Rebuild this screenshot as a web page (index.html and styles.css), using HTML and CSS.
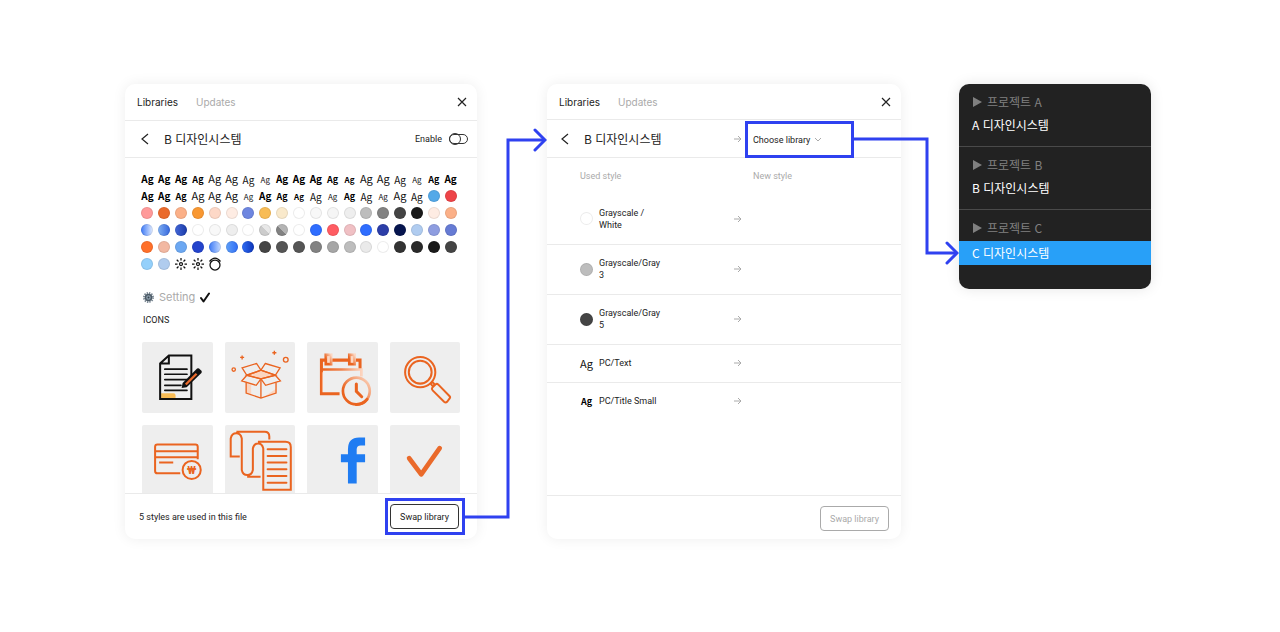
FILE: index.html
```html
<!DOCTYPE html>
<html lang="ko">
<head>
    <meta charset="UTF-8">
    <title>Swap library</title>
    <link rel="stylesheet" href="styles.css">
</head>
<body>
    <main class="board">
        <section class="panel">
            <header class="tabs">
                <button type="button" class="tab active">Libraries</button>
                <button type="button" class="tab">Updates</button>
                <button type="button" class="close" aria-label="Close">
                    <svg width="10" height="10" viewBox="0 0 10 10"><path d="M1 1l8 8M9 1l-8 8"/></svg>
                </button>
            </header>
            <div class="title-row">
                <button type="button" class="back" aria-label="Back">
                    <svg width="8" height="12" viewBox="0 0 8 12"><path d="M7 1L1 6l6 5"/></svg>
                </button>
                <h2>B 디자인시스템</h2>
                <label class="enable">Enable <input type="checkbox" class="toggle"></label>
            </div>
            <div class="content">
                <div class="swatches" id="swatches"></div>
                <div class="setting">
                    <svg width="11" height="11" viewBox="0 0 22 22">
                        <circle cx="11" cy="11" r="9" fill="none" stroke="#7b8894" stroke-width="4" stroke-dasharray="2.7 2"/>
                        <circle cx="11" cy="11" r="6" fill="#8fa0ae" stroke="#4c5a66" stroke-width="3"/>
                        <circle cx="11" cy="11" r="2" fill="#36424c"/>
                    </svg>
                    <span>Setting</span>
                    <svg width="10" height="11" viewBox="0 0 20 22"><path d="M2 12l5 7L18 3" fill="none" stroke="#111" stroke-width="4" stroke-linecap="round" stroke-linejoin="round"/></svg>
                </div>
                <h3>ICONS</h3>
                <div class="icons">
                    <div class="icon">
                        <svg viewBox="0 0 210 210">
                            <path d="M57 153h37a6 6 0 0 1 6 6v8H57z" fill="#f8bc55"/>
                            <path d="M80 40h67v130H54V64zM80 40v24H54" fill="none" stroke="#111" stroke-width="6"/>
                            <path d="M68 81h66M68 96h66M68 112h66M68 129h48M68 144h66" stroke="#111" stroke-width="5" stroke-linecap="round"/>
                            <path d="M118 137l3-15 43-43a5 5 0 0 1 6 0l7 7a5 5 0 0 1 0 6l-44 43z" fill="#111"/>
                            <path d="M128 124l32-32 5 5-32 32z" fill="#ea6a2b"/>
                        </svg>
                    </div>
                    <div class="icon">
                        <svg viewBox="0 0 210 210" class="line-thin">
                            <path d="M65 99l42-15 43 15-43 11z" fill="#fbd5c0"/>
                            <path d="M64 122l14 5v32l-14-6zM121 160l30-20v12l-30 11z" class="tint"/>
                            <path d="M63 121v31l44 15 45-15v-31M107 110v57"/>
                            <path d="M51 77l43-13 13 20-42 15zM120 64l44 13-14 22-43-15zM65 99l-15 17 43 13 14-19zM150 99l15 17-44 13-14-19z"/>
                            <path d="M51 40v12M45 46h12M147 26v12M141 32h12"/>
                            <circle cx="26" cy="82" r="5"/>
                            <circle cx="181" cy="53" r="7"/>
                        </svg>
                    </div>
                    <div class="icon">
                        <svg viewBox="0 0 210 210" class="line">
                            <defs>
                                <linearGradient id="fadeX"><stop offset="0" stop-color="#ea6420"/><stop offset=".5" stop-color="#ef8450"/><stop offset="1" stop-color="#fcd3bd"/></linearGradient>
                                <linearGradient id="fadeUp" x1="0" y1="1" x2="1" y2="0"><stop offset=".3" stop-color="#ea6420"/><stop offset="1" stop-color="#fcd8c4"/></linearGradient>
                            </defs>
                            <path d="M97 154H43V54h115v28" stroke="#ea6420" stroke-width="9"/>
                            <path d="M43 82h119v21" stroke="url(#fadeX)" stroke-width="8"/>
                            <path d="M46 90v60" stroke="#fbb088" stroke-width="3"/>
                            <rect x="56" y="38" width="16" height="28" fill="#fcd8c4" stroke="url(#fadeUp)" stroke-width="8"/>
                            <rect x="126" y="38" width="16" height="28" fill="#fcd8c4" stroke="url(#fadeUp)" stroke-width="8"/>
                            <circle cx="147" cy="146" r="40" fill="#eee" stroke="url(#fadeUp)" stroke-width="8"/>
                            <path d="M147 125v22l16 16M147 186a40 40 0 0 0 32-15" stroke-width="9" stroke-linecap="round"/>
                        </svg>
                    </div>
                    <div class="icon">
                        <svg viewBox="0 0 210 210" class="line">
                            <circle cx="90" cy="90" r="45"/>
                            <circle cx="90" cy="90" r="34"/>
                            <path d="M121 124l5-5 7 7-5 7zM126 136l10-10q4-3 8 1l33 34q4 4 0 8l-7 9q-4 4-9 0l-34-34q-4-4-1-8z"/>
                        </svg>
                    </div>
                    <div class="icon">
                        <svg viewBox="0 0 210 210" class="line">
                            <path d="M114 144H46q-7 0-7-7V65q0-7 7-7h113q7 0 7 7v37M39 78h127M39 96h127M51 112h42"/>
                            <circle cx="148" cy="134" r="27"/>
                            <text x="148" y="145" class="won">₩</text>
                        </svg>
                    </div>
                    <div class="icon">
                        <svg viewBox="0 0 210 210" class="line">
                            <path d="M44 94H17V40a17 20 0 0 1 33 0v94a17 20 0 0 0 33 0V70a16 20 0 0 1 31 0v123h82V66q0-16-16-16H98M34 20h84q14 0 14 14v9M66 154h40"/>
                            <path d="M127 72h56M127 92h56M127 112h56M127 132h56M127 152h56M127 172h56" stroke-linecap="round"/>
                        </svg>
                    </div>
                    <div class="icon">
                        <svg viewBox="0 0 210 210"><path d="M122 174v-63h-21V87h21V72q0-35 33-35h18v24h-13q-12 0-12 12v14h25v24h-25v63z" fill="#1f7cf2"/></svg>
                    </div>
                    <div class="icon">
                        <svg viewBox="0 0 210 210"><path d="M57 99l36 48 55-78" fill="none" stroke="#ea6a2b" stroke-width="14" stroke-linecap="round" stroke-linejoin="round"/></svg>
                    </div>
                </div>
            </div>
            <footer>
                <p>5 styles are used in this file</p>
                <div class="highlight">
                    <button type="button" class="swap">Swap library</button>
                </div>
            </footer>
            <svg class="connector to-swap" width="82" height="393" viewBox="0 0 82 393">
                <path d="M0 391H43V14h37"/>
                <path d="M70 4l10 10-10 10" stroke-linecap="round"/>
            </svg>
        </section>

        <section class="panel second">
            <header class="tabs">
                <button type="button" class="tab active">Libraries</button>
                <button type="button" class="tab">Updates</button>
                <button type="button" class="close" aria-label="Close">
                    <svg width="10" height="10" viewBox="0 0 10 10"><path d="M1 1l8 8M9 1l-8 8"/></svg>
                </button>
            </header>
            <div class="title-row">
                <button type="button" class="back" aria-label="Back">
                    <svg width="8" height="12" viewBox="0 0 8 12"><path d="M7 1L1 6l6 5"/></svg>
                </button>
                <h2>B 디자인시스템</h2>
                <svg class="arrow" width="8" height="8" viewBox="0 0 8 8"><path d="M0 4h7M4 1l3 3-3 3"/></svg>
                <div class="highlight choose">
                    <select aria-label="Choose library">
                        <option>Choose library</option>
                        <option>A 디자인시스템</option>
                        <option>B 디자인시스템</option>
                        <option>C 디자인시스템</option>
                    </select>
                    <svg width="6" height="4" viewBox="0 0 6 4"><path d="M0 0l3 3 3-3"/></svg>
                </div>
            </div>
            <div class="content">
                <table>
                    <thead>
                        <tr><th class="used">Used style</th><th class="to"></th><th>New style</th></tr>
                    </thead>
                    <tbody>
                        <tr class="tall">
                            <td><div class="style"><i class="dot white"></i><span>Grayscale / White</span></div></td>
                            <td><svg class="arrow" width="8" height="8" viewBox="0 0 8 8"><path d="M0 4h7M4 1l3 3-3 3"/></svg></td>
                            <td></td>
                        </tr>
                        <tr class="tall">
                            <td><div class="style"><i class="dot gray3"></i><span>Grayscale/Gray 3</span></div></td>
                            <td><svg class="arrow" width="8" height="8" viewBox="0 0 8 8"><path d="M0 4h7M4 1l3 3-3 3"/></svg></td>
                            <td></td>
                        </tr>
                        <tr class="tall">
                            <td><div class="style"><i class="dot gray5"></i><span>Grayscale/Gray 5</span></div></td>
                            <td><svg class="arrow" width="8" height="8" viewBox="0 0 8 8"><path d="M0 4h7M4 1l3 3-3 3"/></svg></td>
                            <td></td>
                        </tr>
                        <tr>
                            <td><div class="style"><b class="ag">Ag</b><span>PC/Text</span></div></td>
                            <td><svg class="arrow" width="8" height="8" viewBox="0 0 8 8"><path d="M0 4h7M4 1l3 3-3 3"/></svg></td>
                            <td></td>
                        </tr>
                        <tr>
                            <td><div class="style"><b class="ag bold">Ag</b><span>PC/Title Small</span></div></td>
                            <td><svg class="arrow" width="8" height="8" viewBox="0 0 8 8"><path d="M0 4h7M4 1l3 3-3 3"/></svg></td>
                            <td></td>
                        </tr>
                    </tbody>
                </table>
            </div>
            <footer>
                <button type="button" class="swap" disabled>Swap library</button>
            </footer>
            <svg class="connector to-menu" width="105" height="130" viewBox="0 0 105 130">
                <path d="M0 2h73v114h30"/>
                <path d="M93 106l10 10-10 10" stroke-linecap="round"/>
            </svg>
        </section>

        <nav class="menu">
            <div class="group">
                <h4>프로젝트 A</h4>
                <button type="button">A 디자인시스템</button>
            </div>
            <div class="group">
                <h4>프로젝트 B</h4>
                <button type="button">B 디자인시스템</button>
            </div>
            <div class="group">
                <h4>프로젝트 C</h4>
                <button type="button" class="selected">C 디자인시스템</button>
            </div>
        </nav>
    </main>

    <script>
        // b = bold, r = regular; l / m / s = size
        const textStyles = [
            "bl bl bl bm rl rl rm rs bl bl bl bm bs rl rl rm rs bm bl",
            "bl bl bm rl rl rl rs bl bm bs rm rs bm rm rs rl rm"
        ].join(" ").split(" ");

        const colors = [
            "#54a9e8", "#ee4448",

            "#ff9a9a", "#ea6a2b", "#fbb088", "#f99832", "#fdd8c7", "#feece3", "#6e86e0", "#f8bc55", "#f9e9cb", "#fff",
            "#f8f8f8", "#f5f5f5", "#eee", "#bdbdbd", "#828282", "#444", "#1a1a1a", "#feece3", "#fbb088",

            "linear-gradient(90deg, #3b78f6, #e6efff)", "linear-gradient(90deg, #80b0f2, #3566dd)",
            "linear-gradient(90deg, #4468d8, #1a3aa8)", "#fff", "#f8f8f8", "#eee", "#fff",
            "linear-gradient(45deg, #ccc 50%, #e8e8e8 50%)", "linear-gradient(45deg, #828282 50%, #b4b4b4 50%)", "#fff",
            "#2f6dff", "#ff5c62", "#f0c0c4", "#2f6dff", "#2c3ea8", "#06154f", "#b0ccf0", "#8e9de0", "#667bd4",

            "#ff702a", "#f2b8a2", "#6ca8f2", "#2444cc", "linear-gradient(90deg, #3b78f6, #c8dcff)",
            "linear-gradient(90deg, #5fa0f8, #2f6df6)", "linear-gradient(90deg, #2f6df6, #0c34b8)",
            "#444", "#555", "#555", "#828282", "#a6a6a6", "#bdbdbd", "#eaeaea", "#fff", "#333", "#2a2a2a", "#1a1a1a", "#444",

            "#94d0fb", "#b0ccee"
        ];

        const sun = '<svg width="12" height="12" viewBox="0 0 24 24" fill="none" stroke="#111" stroke-width="2.500"><circle cx="12" cy="12" r="3"/><path d="M12 0v5M12 19v5M0 12h5M19 12h5M3.500 3.500l3.500 3.500M17 17l3.500 3.500M3.500 20.500l3.500-3.500M17 7l3.500-3.500"/></svg>';
        const ring = '<svg width="12" height="14" viewBox="0 0 24 28" fill="none" stroke="#111" stroke-width="2.500"><circle cx="12" cy="16" r="10"/><path d="M1 9Q12-5 23 9"/></svg>';

        const box = document.getElementById("swatches");

        function addCell(content) {
            const cell = document.createElement("div");
            cell.className = "cell";
            if (typeof content === "string") {
                cell.innerHTML = content;
            } else {
                cell.append(content);
            }
            box.append(cell);
        }

        for (const style of textStyles) {
            const el = document.createElement("span");
            el.className = "ag " + style[0] + " " + style[1];
            el.textContent = "Ag";
            addCell(el);
        }
        for (const color of colors) {
            const el = document.createElement("i");
            el.className = "dot";
            el.style.background = color;
            addCell(el);
        }
        addCell(sun);
        addCell(sun);
        addCell(ring);
    </script>
</body>
</html>
```
FILE: styles.css
```css
* {
    box-sizing: border-box;
}
body {
    margin: 0;
    background: #fff;
    color: #222;
    font-family: Roboto, "Noto Sans CJK KR", sans-serif;
    font-size: 9px;
}
h2, h3, h4, p {
    margin: 0;
    font-weight: normal;
}
button, select {
    margin: 0;
    padding: 0;
    border: none;
    background: none;
    color: inherit;
    font: inherit;
}
svg {
    display: block;
}
.board {
    display: flex;
    align-items: flex-start;
    padding: 84px 129px 84px 125px;
}

/* panels */
.panel {
    position: relative;
    display: flex;
    flex-direction: column;
    flex: 352 1 0;
    height: 455px;
    margin-right: 70px;
    border-radius: 10px;
    background: #fff;
    box-shadow: 0 0 14px rgba(0, 0, 0, 0.07);
}
.panel.second {
    flex-grow: 354;
    margin-right: 58px;
}
.tabs {
    display: flex;
    align-items: center;
    gap: 18px;
    height: 37px;
    padding: 0 10px 0 12px;
    border-bottom: 1px solid #eaeaea;
    font-family: Inter, sans-serif;
    font-size: 10px;
}
.second .tabs {
    height: 36px;
}
.tab {
    color: #aaa;
}
.tab.active {
    color: #222;
}
.close {
    margin-left: auto;
}
.close path, .back path {
    fill: none;
    stroke: #222;
    stroke-width: 1.2;
}
.title-row {
    display: flex;
    align-items: center;
    height: 37px;
    padding: 0 9px 0 16px;
    border-bottom: 1px solid #eaeaea;
}
.second .title-row {
    height: 38px;
    padding: 0 47px 0 14px;
}
h2 {
    margin-left: 15px;
    font-family: "Noto Sans CJK KR", sans-serif;
    font-size: 12px;
    line-height: 16px;
}
.enable {
    display: flex;
    align-items: center;
    gap: 7px;
    margin-left: auto;
}
.toggle {
    appearance: none;
    display: flex;
    align-items: center;
    width: 19px;
    height: 10px;
    margin: 0;
    border: 1px solid #333;
    border-radius: 5px;
}
.toggle::before {
    content: "";
    flex: none;
    width: 10px;
    height: 10px;
    margin-left: -1px;
    border: 1px solid #333;
    border-radius: 50%;
}
.content {
    flex: 1;
    min-height: 0;
    overflow: hidden;
}
footer {
    display: flex;
    align-items: center;
    justify-content: space-between;
    height: 46px;
    padding: 0 12px 0 14px;
    border-top: 1px solid #eaeaea;
}
.second footer {
    height: 44px;
    padding-top: 2px;
    justify-content: flex-end;
}
.swap {
    width: 69px;
    height: 25px;
    border: 1px solid #333;
    border-radius: 4px;
}
.swap:disabled {
    border-color: #aaa;
    color: #aaa;
}
.highlight {
    padding: 3px 3px 3px 2px;
    border: 3px solid #2f41f0;
}

/* styles and icons of the library */
.swatches {
    display: grid;
    grid-template-columns: repeat(19, 1fr);
    grid-auto-rows: 17px;
    padding: 12px 18px 0 14px;
}
.cell {
    display: flex;
    align-items: center;
    justify-content: center;
}
.dot {
    flex: none;
    width: 12px;
    height: 12px;
    border-radius: 50%;
    box-shadow: inset 0 0 0 1px rgba(0, 0, 0, 0.08);
}
.ag {
    color: #111;
    font-family: "Noto Sans CJK KR", sans-serif;
    font-size: 11px;
    font-weight: normal;
    line-height: 17px;
}
.ag.b, .ag.bold {
    color: #000;
    font-size: 10px;
    font-weight: bold;
}
.ag.m {
    padding-top: 2px;
    font-size: 10px;
}
.ag.b.m {
    font-size: 9px;
}
.ag.s {
    padding-top: 2px;
    font-size: 8px;
}
.ag.b.s {
    font-size: 8px;
}
.setting {
    display: flex;
    align-items: center;
    gap: 5px;
    height: 16px;
    margin: 17px 0 0 18px;
    color: #aaa;
    font-family: Inter, sans-serif;
    font-size: 11px;
}
h3 {
    margin: 8px 0 0 18px;
    font-size: 9px;
    line-height: 14px;
}
.icons {
    display: grid;
    grid-template-columns: repeat(4, 1fr);
    gap: 12px;
    padding: 15px 17px 0;
}
.icon {
    border-radius: 2px;
    background: #eee;
}
.line, .line-thin {
    fill: none;
    stroke: #ea6420;
    stroke-width: 6;
}
.line-thin {
    stroke-width: 4;
}
.line-thin .tint {
    fill: #fbd5c0;
    stroke: none;
}
.won {
    fill: #ea6420;
    stroke: none;
    font-size: 34px;
    font-weight: bold;
    text-anchor: middle;
}

/* swap table */
.arrow, .choose svg {
    fill: none;
    stroke: #aaa;
    stroke-width: 1;
}
.title-row .arrow {
    margin: 0 3px 0 auto;
}
.choose {
    display: flex;
    align-items: center;
    align-self: flex-end;
    gap: 4px;
    width: 109px;
    height: 37px;
    margin-bottom: -1px;
    padding: 0 0 0 5px;
}
select {
    appearance: none;
}
table {
    width: 100%;
    border-collapse: collapse;
    table-layout: fixed;
}
th {
    height: 36px;
    padding: 0;
    color: #aaa;
    font-weight: normal;
    text-align: left;
}
.used {
    width: 187px;
    padding-left: 33px;
}
.to {
    width: 19px;
}
td {
    height: 38px;
    padding: 0;
    border-bottom: 1px solid #eaeaea;
}
.tall td {
    height: 50px;
}
tr:last-child td {
    border-bottom: none;
}
.style {
    display: flex;
    align-items: center;
    padding-left: 33px;
    line-height: 12px;
}
.style span {
    width: 64px;
}
.style .dot, .style .ag {
    width: 13px;
    margin-right: 6px;
}
.style .dot {
    height: 13px;
}
.style .bold {
    padding-left: 1px;
    font-size: 9px;
}
.gray3 {
    background: #bdbdbd;
}
.gray5 {
    background: #444;
}

/* arrows between the steps */
.connector {
    position: absolute;
    z-index: 1;
    fill: none;
    stroke: #2f41f0;
    stroke-width: 3;
    pointer-events: none;
}
.to-swap {
    top: 42px;
    left: calc(100% - 12px);
}
.to-menu {
    top: 53px;
    left: calc(100% - 47px);
}

/* library menu */
.menu {
    flex: 192 1 0;
    padding-bottom: 24px;
    border-radius: 10px;
    background: #222;
    box-shadow: 0 0 14px rgba(0, 0, 0, 0.1);
    color: #fff;
    font-family: "Noto Sans CJK KR", sans-serif;
    font-size: 12px;
}
.group {
    padding: 7px 0 9px;
    border-bottom: 1px solid #4a4a4a;
}
.group:last-child {
    padding-bottom: 0;
    border-bottom: none;
}
h4 {
    display: flex;
    align-items: center;
    gap: 5px;
    padding-left: 14px;
    color: #808080;
    font-size: 12px;
    line-height: 22px;
}
h4::before {
    content: "";
    border-left: 9px solid #808080;
    border-top: 5px solid transparent;
    border-bottom: 5px solid transparent;
}
.group button {
    display: block;
    width: 100%;
    height: 24px;
    padding: 0 0 2px 13px;
    text-align: left;
}
.group .selected {
    margin-top: 2px;
    background: #28a0f8;
}
```
